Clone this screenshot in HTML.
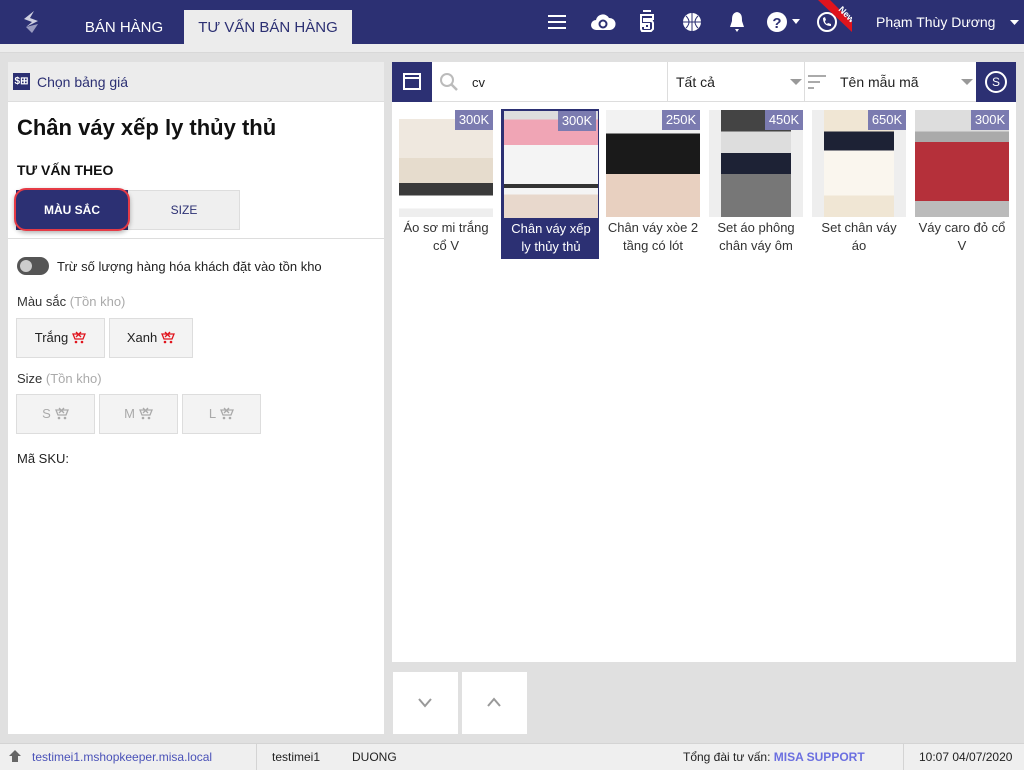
<!DOCTYPE html>
<html><head><meta charset="utf-8"><style>
*{box-sizing:border-box;margin:0;padding:0}
body{width:1024px;height:770px;background:#e0e0e0;font-family:"Liberation Sans",sans-serif;position:relative;overflow:hidden;color:#222}
.abs{position:absolute}
.top{left:0;top:0;width:1024px;height:44px;background:#2c3073}
.tab{top:10px;height:34px;font-size:15px;color:#fff;line-height:36px;text-align:center}
.card{position:absolute;top:109px;width:98px;height:150px}
.card .img{position:absolute;left:2px;top:1px;width:94px;height:107px;background:#eee}
.card .pr{position:absolute;right:2px;top:1px;width:38px;height:20px;background:#7b7bb0;color:#fff;font-size:13px;line-height:20px;text-align:center}
.card .lb{position:absolute;left:0;top:110px;width:98px;text-align:center;font-size:13px;line-height:18px;color:#333}
.sel{background:#2c3073;border:1px solid #2c3073}
.sel .lb{color:#fff}
.btn{position:absolute;background:#f3f3f3;border:1px solid #ddd;font-size:13px;text-align:center}
.cart{display:inline-block;vertical-align:-2px;margin-left:4px}
</style></head><body>
<div class="abs" style="left:0;top:44px;width:1024px;height:9px;background:#ececec;border-bottom:1px solid #d8d8d8"></div>
<div class="abs top"></div>
<svg class="abs" style="left:20px;top:10px" width="22" height="24" viewBox="0 0 22 24"><path d="M14 1 L4 9 L12 12 L6 17 L18 11 L10 8 Z" fill="#cfd0e0"/><path d="M6 17 L12 23 L18 14 Z" fill="#9a9cc0"/></svg>
<div class="abs tab" style="left:64px;width:120px;background:#2c3073">BÁN HÀNG</div>
<div class="abs tab" style="left:184px;width:168px;background:#ececec;color:#2c3073">TƯ VẤN BÁN HÀNG</div>
<svg class="abs" style="left:548px;top:14px" width="18" height="16"><rect y="1" width="18" height="2" fill="#fff"/><rect y="7" width="18" height="2" fill="#fff"/><rect y="13" width="18" height="2" fill="#fff"/></svg>
<svg class="abs" style="left:590px;top:12px" width="26" height="20" viewBox="0 0 26 20"><path d="M6 18 A5 5 0 0 1 6 8 A7 7 0 0 1 19 6 A6 6 0 0 1 20 18 Z" fill="#fff"/><circle cx="13" cy="12" r="3.5" fill="none" stroke="#2c3073" stroke-width="2"/></svg>
<svg class="abs" style="left:638px;top:10px" width="18" height="23" viewBox="0 0 18 23"><path d="M5 1H13M3 5H15V9H6V11H14L15 13V19L13 21H4L3 19V16H7V18H11V14H3Z" fill="none" stroke="#fff" stroke-width="2"/></svg>
<svg class="abs" style="left:682px;top:12px" width="20" height="20"><circle cx="10" cy="10" r="9" fill="#fff"/><path d="M1 10H19M10 1V19M4 4Q10 10 4 16M16 4Q10 10 16 16" stroke="#2c3073" stroke-width="1" fill="none"/></svg>
<svg class="abs" style="left:728px;top:11px" width="18" height="22"><path d="M9 1 C4 2 4 6 4 10 L2 16 H16 L14 10 C14 6 14 2 9 1Z M7 18 H11 L9 21Z" fill="#fff"/></svg>
<svg class="abs" style="left:766px;top:11px" width="22" height="22"><circle cx="11" cy="11" r="10" fill="#fff"/><text x="11" y="17" font-size="15" font-weight="bold" text-anchor="middle" fill="#2c3073" font-family="Liberation Sans">?</text></svg>
<svg class="abs" style="left:792px;top:19px" width="8" height="5"><path d="M0 0H8L4 5Z" fill="#fff"/></svg>
<svg class="abs" style="left:816px;top:11px" width="22" height="22"><circle cx="11" cy="11" r="9" fill="none" stroke="#fff" stroke-width="2"/><path d="M7 7 Q7 15 15 15 L15 13 L12 12 L11 13 Q9 12 9 10 L10 9 L9 6Z" fill="#fff"/></svg>
<svg class="abs" style="left:818px;top:0" width="34" height="32"><path d="M0 0H12L34 22V32Z" fill="#e0141d"/><text x="20" y="10" font-size="9" font-weight="bold" fill="#fff" transform="rotate(45 20 10)" font-family="Liberation Sans">New</text></svg>
<div class="abs" style="left:876px;top:14px;color:#fff;font-size:14px">Phạm Thùy Dương</div>
<svg class="abs" style="left:1010px;top:20px" width="9" height="5"><path d="M0 0H9L4.5 5Z" fill="#fff"/></svg>

<div class="abs" style="left:8px;top:62px;width:376px;height:672px;background:#fff"></div>
<div class="abs" style="left:8px;top:62px;width:376px;height:40px;background:#ececec;border-bottom:1px solid #ddd"></div>
<div class="abs" style="left:13px;top:73px;width:17px;height:17px;background:#2c3073;color:#fff;font-size:10px;font-weight:bold;line-height:17px;text-align:center">$⊞</div>
<div class="abs" style="left:37px;top:74px;font-size:14px;color:#2c3073">Chọn bảng giá</div>
<div class="abs" style="left:17px;top:115px;font-size:22px;font-weight:bold;color:#111">Chân váy xếp ly thủy thủ</div>
<div class="abs" style="left:17px;top:162px;font-size:14px;font-weight:bold;color:#111">TƯ VẤN THEO</div>
<div class="abs" style="left:16px;top:190px;width:224px;height:40px;background:#efefef;border:1px solid #ddd"></div>
<div class="abs" style="left:16px;top:190px;width:112px;height:40px;background:#2c3073"></div>
<div class="abs" style="left:14px;top:188px;width:116px;height:43px;border:2px solid #e53b46;border-radius:12px;box-shadow:0 2px 5px rgba(0,0,0,.3)"></div>
<div class="abs" style="left:16px;top:203px;width:112px;text-align:center;color:#fff;font-weight:bold;font-size:12px">MÀU SẮC</div>
<div class="abs" style="left:128px;top:203px;width:112px;text-align:center;color:#2c3073;font-size:12px">SIZE</div>
<div class="abs" style="left:8px;top:238px;width:376px;height:1px;background:#ddd"></div>
<div class="abs" style="left:17px;top:257px;width:32px;height:18px;border-radius:9px;background:#555"></div>
<div class="abs" style="left:20px;top:260px;width:12px;height:12px;border-radius:6px;background:#ccc"></div>
<div class="abs" style="left:57px;top:259px;font-size:13px">Trừ số lượng hàng hóa khách đặt vào tồn kho</div>
<div class="abs" style="left:17px;top:294px;font-size:13px;color:#333">Màu sắc <span style="color:#aaa">(Tồn kho)</span></div>
<div class="btn" style="left:16px;top:318px;width:89px;height:40px;line-height:38px">Trắng<svg class="cart" width="14" height="13"><path d="M1 3H13L11 8H3ZM4 1L9 6M9 1L4 6" stroke="#e0141d" stroke-width="1.3" fill="none"/><circle cx="4" cy="11" r="1.3" fill="#e0141d"/><circle cx="10" cy="11" r="1.3" fill="#e0141d"/></svg></div>
<div class="btn" style="left:109px;top:318px;width:84px;height:40px;line-height:38px">Xanh<svg class="cart" width="14" height="13"><path d="M1 3H13L11 8H3ZM4 1L9 6M9 1L4 6" stroke="#e0141d" stroke-width="1.3" fill="none"/><circle cx="4" cy="11" r="1.3" fill="#e0141d"/><circle cx="10" cy="11" r="1.3" fill="#e0141d"/></svg></div>
<div class="abs" style="left:17px;top:371px;font-size:13px;color:#333">Size <span style="color:#aaa">(Tồn kho)</span></div>
<div class="btn" style="left:16px;top:394px;width:79px;height:40px;line-height:38px;color:#aaa">S<svg class="cart" width="14" height="13"><path d="M1 3H13L11 8H3ZM4 1L9 6M9 1L4 6" stroke="#aaa" stroke-width="1.3" fill="none"/><circle cx="4" cy="11" r="1.3" fill="#aaa"/><circle cx="10" cy="11" r="1.3" fill="#aaa"/></svg></div>
<div class="btn" style="left:99px;top:394px;width:79px;height:40px;line-height:38px;color:#aaa">M<svg class="cart" width="14" height="13"><path d="M1 3H13L11 8H3ZM4 1L9 6M9 1L4 6" stroke="#aaa" stroke-width="1.3" fill="none"/><circle cx="4" cy="11" r="1.3" fill="#aaa"/><circle cx="10" cy="11" r="1.3" fill="#aaa"/></svg></div>
<div class="btn" style="left:182px;top:394px;width:79px;height:40px;line-height:38px;color:#aaa">L<svg class="cart" width="14" height="13"><path d="M1 3H13L11 8H3ZM4 1L9 6M9 1L4 6" stroke="#aaa" stroke-width="1.3" fill="none"/><circle cx="4" cy="11" r="1.3" fill="#aaa"/><circle cx="10" cy="11" r="1.3" fill="#aaa"/></svg></div>
<div class="abs" style="left:17px;top:451px;font-size:13px">Mã SKU:</div>

<div class="abs" style="left:392px;top:62px;width:624px;height:40px;background:#fff;border-bottom:1px solid #ddd"></div>
<div class="abs" style="left:392px;top:62px;width:40px;height:40px;background:#2c3073"></div>
<div class="abs" style="left:403px;top:73px;width:18px;height:17px;border:2px solid #fff"></div>
<div class="abs" style="left:403px;top:77px;width:18px;height:2px;background:#fff"></div>
<svg class="abs" style="left:439px;top:72px" width="20" height="20"><circle cx="8" cy="8" r="6" fill="none" stroke="#bbb" stroke-width="2"/><path d="M12 12L18 18" stroke="#bbb" stroke-width="2.5"/></svg>
<div class="abs" style="left:472px;top:75px;font-size:13px">cv</div>
<div class="abs" style="left:667px;top:62px;width:1px;height:40px;background:#ddd"></div>
<div class="abs" style="left:676px;top:74px;font-size:14px">Tất cả</div>
<svg class="abs" style="left:790px;top:79px" width="12" height="6"><path d="M0 0H12L6 6Z" fill="#999"/></svg>
<div class="abs" style="left:804px;top:62px;width:1px;height:40px;background:#ddd"></div>
<svg class="abs" style="left:808px;top:74px" width="20" height="16"><rect y="1" width="18" height="2" fill="#aaa"/><rect y="7" width="12" height="2" fill="#aaa"/><rect y="13" width="6" height="2" fill="#aaa"/></svg>
<div class="abs" style="left:840px;top:74px;font-size:14px">Tên mẫu mã</div>
<svg class="abs" style="left:961px;top:79px" width="12" height="6"><path d="M0 0H12L6 6Z" fill="#999"/></svg>
<div class="abs" style="left:976px;top:62px;width:40px;height:40px;background:#2c3073"></div>
<div class="abs" style="left:985px;top:71px;width:22px;height:22px;border:2px solid #fff;border-radius:50%;color:#fff;font-size:12px;text-align:center;line-height:18px">S</div>
<div class="abs" style="left:392px;top:102px;width:624px;height:560px;background:#fff"></div>

<div class="card" style="left:397px"><div class="img" style="background:linear-gradient(#fff 0 9px,#efe8df 9px 45%,#e6dccd 45% 68%,#3a3a3a 68% 80%,#fff 80% 92%,#eee 92%)"></div><div class="pr">300K</div><div class="lb">Áo sơ mi trắng<br>cổ V</div></div>
<div class="card sel" style="left:501px"><div class="img" style="background:linear-gradient(#ddd 0 8%,#f0a5b5 8% 32%,#f4f4f4 32% 68%,#333 68% 72%,#f4f4f4 72% 78%,#e8d8cc 78%)"></div><div class="pr">300K</div><div class="lb">Chân váy xếp<br>ly thủy thủ</div></div>
<div class="card" style="left:604px"><div class="img" style="background:linear-gradient(#f2f2f2 0 22%,#1a1a1a 22% 60%,#e8d0c0 60%)"></div><div class="pr">250K</div><div class="lb">Chân váy xòe 2<br>tầng có lót</div></div>
<div class="card" style="left:707px"><div class="img" style="background:linear-gradient(90deg,#eee 0 12px,transparent 12px 82px,#eee 82px),linear-gradient(#444 0 20%,#ddd 20% 40%,#1d2235 40% 60%,#777 60%)"></div><div class="pr">450K</div><div class="lb">Set áo phông<br>chân váy ôm</div></div>
<div class="card" style="left:810px"><div class="img" style="background:linear-gradient(90deg,#eee 0 12px,transparent 12px 82px,#eee 82px),linear-gradient(#f0e6d4 0 20%,#1d2235 20% 38%,#faf6ee 38% 80%,#f0e6d4 80%)"></div><div class="pr">650K</div><div class="lb">Set chân váy<br>áo</div></div>
<div class="card" style="left:913px"><div class="img" style="background:linear-gradient(#ddd 0 20%,#aaa 20% 30%,#b5303a 30% 85%,#bbb 85%)"></div><div class="pr">300K</div><div class="lb">Váy caro đỏ cổ<br>V</div></div>

<div class="abs" style="left:393px;top:672px;width:65px;height:62px;background:#fff"></div>
<div class="abs" style="left:462px;top:672px;width:65px;height:62px;background:#fff"></div>
<svg class="abs" style="left:418px;top:698px" width="14" height="10"><path d="M1 1L7 8L13 1" stroke="#999" stroke-width="2" fill="none"/></svg>
<svg class="abs" style="left:487px;top:697px" width="14" height="10"><path d="M1 9L7 2L13 9" stroke="#999" stroke-width="2" fill="none"/></svg>

<div class="abs" style="left:0;top:743px;width:1024px;height:27px;background:#efefef;border-top:1px solid #d4d4d4"></div>
<div class="abs" style="left:256px;top:744px;width:1px;height:26px;background:#d4d4d4"></div>
<div class="abs" style="left:903px;top:744px;width:1px;height:26px;background:#d4d4d4"></div>
<svg class="abs" style="left:9px;top:750px" width="12" height="12"><path d="M6 0L12 6H9V12H3V6H0Z" fill="#666"/></svg>
<div class="abs" style="left:32px;top:750px;font-size:12px;color:#4a52b8">testimei1.mshopkeeper.misa.local</div>
<div class="abs" style="left:272px;top:750px;font-size:12px">testimei1</div>
<div class="abs" style="left:352px;top:750px;font-size:12px">DUONG</div>
<div class="abs" style="left:683px;top:750px;font-size:12px">Tổng đài tư vấn: <b style="color:#6b6fe0">MISA SUPPORT</b></div>
<div class="abs" style="left:919px;top:750px;font-size:12px">10:07 04/07/2020</div>
</body></html>
